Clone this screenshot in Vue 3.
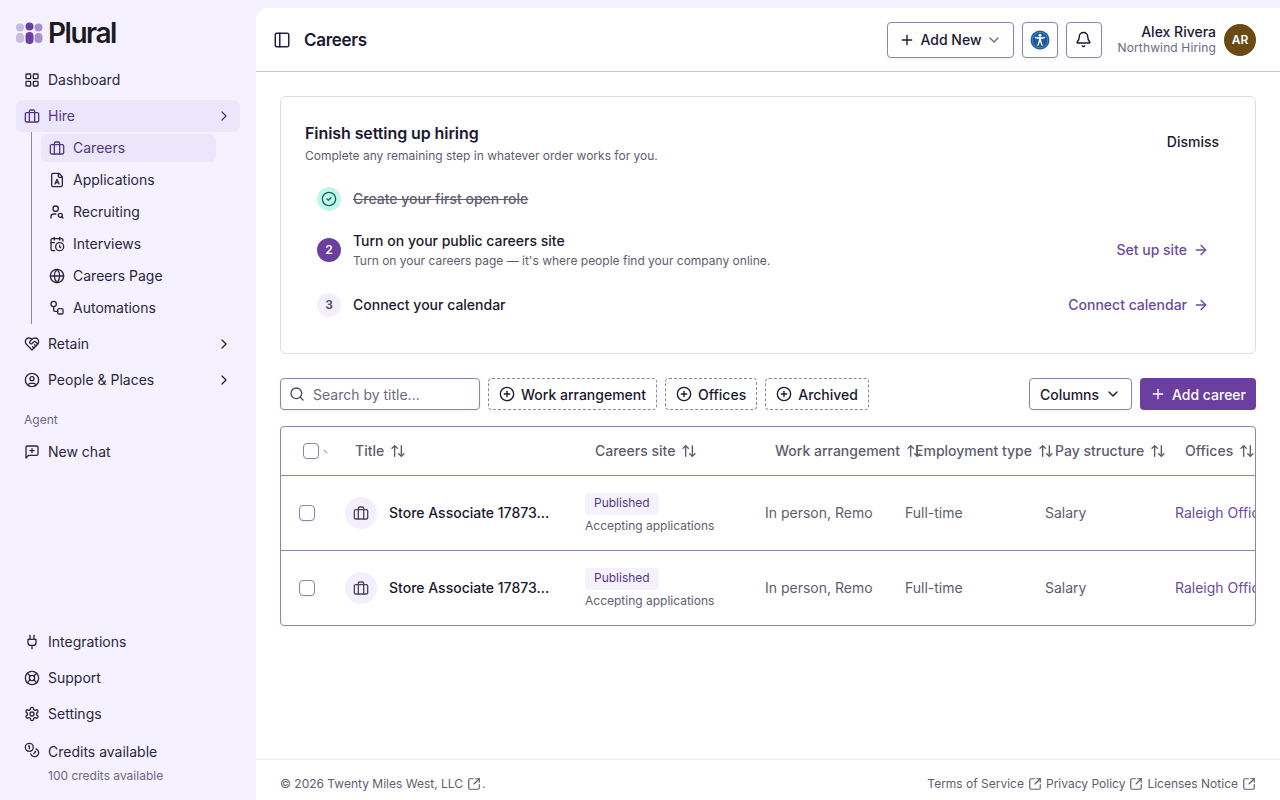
<template>
  <div class="shell">
    <aside class="sidebar">
      <div class="logo">
        <svg width="28" height="24" viewBox="0 0 28 24">
          <circle cx="5" cy="6.5" r="4" fill="#c7bbe4" />
          <circle cx="14.5" cy="5.5" r="4" fill="#6b3fa0" />
          <circle cx="23.5" cy="6.5" r="4" fill="#a88ed2" />
          <rect x="1" y="12" width="8" height="10" rx="4" fill="#c7bbe4" />
          <rect x="10.5" y="11" width="8" height="12" rx="4" fill="#6b3fa0" />
          <rect x="19.5" y="12" width="8" height="10" rx="4" fill="#a88ed2" />
        </svg>
        <span class="logo-text">Plural</span>
      </div>

      <nav class="nav">
        <a class="nav-item">
          <Icon name="grid" />
          <span>Dashboard</span>
        </a>
        <a class="nav-item active">
          <Icon name="briefcase" />
          <span>Hire</span>
          <Icon name="chevronRight" class="chev" />
        </a>
        <div class="subnav">
          <a
            v-for="(item, i) in hireItems"
            :key="item.label"
            class="sub-item"
            :class="{ current: i === 0 }"
          >
            <Icon :name="item.icon" />
            <span>{{ item.label }}</span>
          </a>
        </div>
        <a class="nav-item">
          <Icon name="heart" />
          <span>Retain</span>
          <Icon name="chevronRight" class="chev" />
        </a>
        <a class="nav-item">
          <Icon name="userCircle" />
          <span>People &amp; Places</span>
          <Icon name="chevronRight" class="chev" />
        </a>
        <div class="nav-label">Agent</div>
        <a class="nav-item">
          <Icon name="chat" />
          <span>New chat</span>
        </a>
      </nav>

      <div class="nav bottom">
        <a class="nav-item">
          <Icon name="plug" />
          <span>Integrations</span>
        </a>
        <a class="nav-item">
          <Icon name="buoy" />
          <span>Support</span>
        </a>
        <a class="nav-item">
          <Icon name="settings" />
          <span>Settings</span>
        </a>
        <div class="credits">
          <div class="credits-top">
            <Icon name="coins" />
            <span>Credits available</span>
          </div>
          <div class="credits-sub">100 credits available</div>
        </div>
      </div>
    </aside>

    <div class="main">
      <header class="topbar">
        <Icon name="panel" :size="18" class="panel-icon" />
        <h1>Careers</h1>
        <div class="topbar-right">
          <button class="btn add-new">
            <Icon name="plus" />
            <span>Add New</span>
            <Icon name="chevronDown" class="muted-chev" />
          </button>
          <button class="btn icon-btn">
            <svg width="20" height="20" viewBox="0 0 20 20">
              <circle cx="10" cy="10" r="9.5" fill="#1c5a9c" />
              <circle cx="10" cy="10" r="7.8" fill="none" stroke="#6f9fd0" stroke-width=".6" />
              <circle cx="10" cy="5.2" r="1.5" fill="#fff" />
              <g fill="none" stroke="#fff" stroke-linecap="round">
                <path d="M5.4 7.5Q10 8.7 14.6 7.5" stroke-width="1.3" />
                <path d="M10 8v3.4" stroke-width="2.2" />
                <path d="M9.4 11 7.9 15.4M10.6 11 12.1 15.4" stroke-width="1.3" />
              </g>
            </svg>
          </button>
          <button class="btn icon-btn">
            <Icon name="bell" :size="17" />
          </button>
          <div class="user">
            <div class="user-name">Alex Rivera</div>
            <div class="user-org">Northwind Hiring</div>
          </div>
          <div class="avatar">AR</div>
        </div>
      </header>

      <main class="content">
        <section class="setup-card">
          <div class="setup-head">
            <div>
              <h2>Finish setting up hiring</h2>
              <p>Complete any remaining step in whatever order works for you.</p>
            </div>
            <button class="dismiss">Dismiss</button>
          </div>
          <div class="steps">
            <div class="step step-first">
              <div class="badge done"><Icon name="circleCheck" :size="16" /></div>
              <div class="step-title struck">Create your first open role</div>
            </div>
            <div class="step step-second">
              <div class="badge now">2</div>
              <div class="step-body">
                <div class="step-title">Turn on your public careers site</div>
                <div class="step-desc">Turn on your careers page — it's where people find your company online.</div>
              </div>
              <a class="step-link">Set up site <Icon name="arrowRight" /></a>
            </div>
            <div class="step step-third">
              <div class="badge later">3</div>
              <div class="step-body">
                <div class="step-title">Connect your calendar</div>
              </div>
              <a class="step-link">Connect calendar <Icon name="arrowRight" /></a>
            </div>
          </div>
        </section>

        <div class="toolbar">
          <label class="search">
            <Icon name="search" />
            <input type="text" placeholder="Search by title...">
          </label>
          <button v-for="f in filters" :key="f" class="filter">
            <Icon name="circlePlus" />
            <span>{{ f }}</span>
          </button>
          <div class="toolbar-right">
            <button class="btn columns">
              <span>Columns</span>
              <Icon name="chevronDown" />
            </button>
            <button class="add-career">
              <Icon name="plus" />
              <span>Add career</span>
            </button>
          </div>
        </div>

        <div class="table-wrap">
          <table>
            <colgroup>
              <col style="width: 54px">
              <col style="width: 240px">
              <col style="width: 180px">
              <col style="width: 140px">
              <col style="width: 140px">
              <col style="width: 130px">
              <col style="width: 200px">
            </colgroup>
            <thead>
              <tr>
                <th class="select-head">
                  <span class="check"></span>
                  <span class="tick"></span>
                </th>
                <th v-for="c in columns" :key="c">
                  <div class="th-inner">
                    <span>{{ c }}</span>
                    <Icon name="sort" />
                  </div>
                </th>
              </tr>
            </thead>
            <tbody>
              <tr v-for="(row, i) in rows" :key="i">
                <td class="select-cell"><span class="check"></span></td>
                <td>
                  <div class="title-cell">
                    <div class="role-icon"><Icon name="briefcase" /></div>
                    <span class="role-name">{{ row.title }}</span>
                  </div>
                </td>
                <td>
                  <span class="pill">{{ row.status }}</span>
                  <div class="accepting">{{ row.note }}</div>
                </td>
                <td class="plain"><div class="clip">{{ row.arrangement }}</div></td>
                <td class="plain">{{ row.type }}</td>
                <td class="plain">{{ row.pay }}</td>
                <td class="office">{{ row.office }}</td>
              </tr>
            </tbody>
          </table>
        </div>
      </main>

      <footer class="footer">
        <div class="copy">
          <span>© 2026 Twenty Miles West, LLC</span>
          <Icon name="external" :size="14" />
          <span class="dot">.</span>
        </div>
        <div class="footer-links">
          <a v-for="l in footerLinks" :key="l">{{ l }} <Icon name="external" :size="14" /></a>
        </div>
      </footer>
    </div>
  </div>
</template>

<script setup>
import { h } from 'vue'

const icons = {
  grid: '<rect width="7" height="7" x="3" y="3" rx="1"/><rect width="7" height="7" x="14" y="3" rx="1"/><rect width="7" height="7" x="14" y="14" rx="1"/><rect width="7" height="7" x="3" y="14" rx="1"/>',
  briefcase: '<path d="M16 21V5a2 2 0 0 0-2-2h-4a2 2 0 0 0-2 2v16"/><rect width="20" height="14" x="2" y="7" rx="2"/>',
  chevronRight: '<path d="m9 18 6-6-6-6"/>',
  chevronDown: '<path d="m6 9 6 6 6-6"/>',
  fileA: '<path d="M15 2H6a2 2 0 0 0-2 2v16a2 2 0 0 0 2 2h12a2 2 0 0 0 2-2V7Z"/><path d="M14 2v4a2 2 0 0 0 2 2h4"/><path d="m9 18 3-7 3 7M10 16h4"/>',
  userSearch: '<circle cx="10" cy="7" r="4"/><path d="M10.3 15H7a4 4 0 0 0-4 4v2"/><circle cx="17" cy="17" r="3"/><path d="m21 21-1.9-1.9"/>',
  calendarClock: '<path d="M21 7.5V6a2 2 0 0 0-2-2H5a2 2 0 0 0-2 2v14a2 2 0 0 0 2 2h3.5"/><path d="M16 2v4"/><path d="M8 2v4"/><path d="M3 10h5"/><path d="M17.5 17.5 16 16.3V14"/><circle cx="16" cy="16" r="6"/>',
  globe: '<circle cx="12" cy="12" r="10"/><path d="M12 2a14.5 14.5 0 0 0 0 20 14.5 14.5 0 0 0 0-20"/><path d="M2 12h20"/>',
  workflow: '<circle cx="7" cy="6" r="4"/><path d="M7 10v5a2 2 0 0 0 2 2h4"/><rect width="8" height="8" x="13" y="13" rx="2"/>',
  heart: '<path d="M19 14c1.49-1.46 3-3.21 3-5.5A5.5 5.5 0 0 0 16.5 3c-1.76 0-3 .5-4.5 2-1.5-1.5-2.74-2-4.5-2A5.5 5.5 0 0 0 2 8.5c0 2.3 1.5 4.05 3 5.5l7 7Z"/><path d="M12 5 9.04 7.96a2.17 2.17 0 0 0 0 3.08c.82.82 2.13.85 3 .07l2.07-1.9a2.82 2.82 0 0 1 3.79 0l2.96 2.66"/><path d="m18 15-2-2"/><path d="m15 18-2-2"/>',
  userCircle: '<circle cx="12" cy="12" r="10"/><circle cx="12" cy="10" r="3"/><path d="M7 20.662V19a2 2 0 0 1 2-2h6a2 2 0 0 1 2 2v1.662"/>',
  chat: '<path d="M21 15a2 2 0 0 1-2 2H7l-4 4V5a2 2 0 0 1 2-2h14a2 2 0 0 1 2 2z"/><path d="M12 7v6"/><path d="M9 10h6"/>',
  plug: '<path d="M12 22v-5"/><path d="M9 8V2"/><path d="M15 8V2"/><path d="M18 8v5a4 4 0 0 1-4 4h-4a4 4 0 0 1-4-4V8Z"/>',
  buoy: '<circle cx="12" cy="12" r="10"/><path d="m4.93 4.93 4.24 4.24"/><path d="m14.83 9.17 4.24-4.24"/><path d="m14.83 14.83 4.24 4.24"/><path d="m9.17 14.83-4.24 4.24"/><circle cx="12" cy="12" r="4"/>',
  settings: '<path d="M12.22 2h-.44a2 2 0 0 0-2 2v.18a2 2 0 0 1-1 1.73l-.43.25a2 2 0 0 1-2 0l-.15-.08a2 2 0 0 0-2.73.73l-.22.38a2 2 0 0 0 .73 2.73l.15.1a2 2 0 0 1 1 1.72v.51a2 2 0 0 1-1 1.74l-.15.09a2 2 0 0 0-.73 2.73l.22.38a2 2 0 0 0 2.73.73l.15-.08a2 2 0 0 1 2 0l.43.25a2 2 0 0 1 1 1.73V20a2 2 0 0 0 2 2h.44a2 2 0 0 0 2-2v-.18a2 2 0 0 1 1-1.73l.43-.25a2 2 0 0 1 2 0l.15.08a2 2 0 0 0 2.73-.73l.22-.39a2 2 0 0 0-.73-2.73l-.15-.08a2 2 0 0 1-1-1.74v-.5a2 2 0 0 1 1-1.74l.15-.09a2 2 0 0 0 .73-2.73l-.22-.38a2 2 0 0 0-2.73-.73l-.15.08a2 2 0 0 1-2 0l-.43-.25a2 2 0 0 1-1-1.73V4a2 2 0 0 0-2-2z"/><circle cx="12" cy="12" r="3"/>',
  coins: '<circle cx="8" cy="8" r="6"/><path d="M18.09 10.37A6 6 0 1 1 10.34 18"/><path d="M7 6h1v4"/><path d="m16.71 13.88.7.71-2.82 2.82"/>',
  panel: '<rect width="18" height="18" x="3" y="3" rx="2"/><path d="M9 3v18"/>',
  plus: '<path d="M5 12h14"/><path d="M12 5v14"/>',
  bell: '<path d="M10.268 21a2 2 0 0 0 3.464 0"/><path d="M3.262 15.326A1 1 0 0 0 4 17h16a1 1 0 0 0 .74-1.673C19.41 13.956 18 12.499 18 8A6 6 0 0 0 6 8c0 4.499-1.411 5.956-2.738 7.326"/>',
  circleCheck: '<circle cx="12" cy="12" r="10"/><path d="m9 12 2 2 4-4"/>',
  arrowRight: '<path d="M5 12h14"/><path d="m12 5 7 7-7 7"/>',
  search: '<circle cx="11" cy="11" r="8"/><path d="m21 21-4.3-4.3"/>',
  circlePlus: '<circle cx="12" cy="12" r="10"/><path d="M8 12h8"/><path d="M12 8v8"/>',
  sort: '<path d="m21 16-4 4-4-4"/><path d="M17 20V4"/><path d="m3 8 4-4 4 4"/><path d="M7 4v16"/>',
  external: '<path d="M21 13v6a2 2 0 0 1-2 2H5a2 2 0 0 1-2-2V5a2 2 0 0 1 2-2h6"/><path d="m21 3-9 9"/><path d="M15 3h6v6"/>'
}

// small inline icon, stroke follows the text colour
const Icon = (props) => h('svg', {
  width: props.size || 16,
  height: props.size || 16,
  viewBox: '0 0 24 24',
  fill: 'none',
  stroke: 'currentColor',
  'stroke-width': 2,
  'stroke-linecap': 'round',
  'stroke-linejoin': 'round',
  innerHTML: icons[props.name]
})
Icon.props = ['name', 'size']

const hireItems = [
  { label: 'Careers', icon: 'briefcase' },
  { label: 'Applications', icon: 'fileA' },
  { label: 'Recruiting', icon: 'userSearch' },
  { label: 'Interviews', icon: 'calendarClock' },
  { label: 'Careers Page', icon: 'globe' },
  { label: 'Automations', icon: 'workflow' }
]

const filters = ['Work arrangement', 'Offices', 'Archived']
const columns = ['Title', 'Careers site', 'Work arrangement', 'Employment type', 'Pay structure', 'Offices']
const footerLinks = ['Terms of Service', 'Privacy Policy', 'Licenses Notice']

const rows = [1, 2].map(() => ({
  title: 'Store Associate 17873...',
  status: 'Published',
  note: 'Accepting applications',
  arrangement: 'In person, Remote',
  type: 'Full-time',
  pay: 'Salary',
  office: 'Raleigh Office'
}))
</script>

<style>
html, body {
  margin: 0;
  background: #f5f1fe;
}
</style>

<style scoped>
* {
  box-sizing: border-box;
}

.shell {
  display: flex;
  height: 800px;
  overflow: hidden;
  background: #f5f1fe;
  font-family: Inter, "Liberation Sans", sans-serif;
  font-size: 14px;
  line-height: 20px;
  color: #1c1830;
}

.sidebar {
  width: 256px;
  flex-shrink: 0;
  display: flex;
  flex-direction: column;
  padding: 18px 16px 16px;
}

.logo {
  display: flex;
  align-items: center;
  gap: 5px;
  height: 30px;
  margin-bottom: 16px;
  margin-left: -1px;
}

.logo-text {
  font-size: 28px;
  line-height: 30px;
  font-weight: 600;
  letter-spacing: -1.5px;
  color: #1b1b1f;
}

.nav {
  display: flex;
  flex-direction: column;
  gap: 4px;
}

.nav.bottom {
  margin-top: auto;
}

.nav-item {
  display: flex;
  align-items: center;
  gap: 8px;
  height: 32px;
  padding: 0 8px;
  border-radius: 6px;
  color: #2a2640;
}

.nav-item.active {
  background: #ece6fb;
  color: #53397f;
}

.chev {
  margin-left: auto;
}

.subnav {
  display: flex;
  flex-direction: column;
  gap: 4px;
  margin: -4px 0 0 15px;
  padding: 2px 0 2px 9px;
  border-left: 1px solid #8d84ad;
  width: 185px;
}

.sub-item {
  display: flex;
  align-items: center;
  gap: 8px;
  height: 28px;
  padding: 0 8px;
  border-radius: 6px;
  color: #2a2640;
}

.sub-item.current {
  background: #ece6fb;
  color: #53397f;
}

.nav-label {
  height: 32px;
  padding: 12px 8px 0;
  font-size: 12px;
  line-height: 16px;
  color: #6c6880;
}

.credits {
  padding: 4px 8px 0;
  height: 50px;
}

.credits-top {
  display: flex;
  align-items: center;
  gap: 8px;
  height: 24px;
  color: #2a2640;
}

.credits-top span {
  margin-top: 4px;
}

.credits-sub {
  margin: 6px 0 0 24px;
  font-size: 12px;
  line-height: 16px;
  color: #6c6880;
}

.main {
  flex: 1;
  min-width: 0;
  display: flex;
  flex-direction: column;
  margin-top: 8px;
  background: #fff;
  border-top-left-radius: 12px;
}

.topbar {
  display: flex;
  align-items: center;
  gap: 12px;
  height: 64px;
  flex-shrink: 0;
  padding: 0 24px 0 17px;
  border-bottom: 1px solid #c9c6d2;
}

.panel-icon {
  color: #26223a;
}

.topbar h1 {
  margin: 0 0 0 1px;
  font-size: 17px;
  font-weight: 600;
  letter-spacing: -0.3px;
  color: #1c1830;
}

.topbar-right {
  display: flex;
  align-items: center;
  margin-left: auto;
}

.btn {
  display: inline-flex;
  align-items: center;
  justify-content: center;
  height: 36px;
  background: #fff;
  border: 1px solid #8d84ad;
  border-radius: 4px;
  font-family: inherit;
  font-size: 14px;
  font-weight: 500;
  color: #1c1830;
  box-shadow: 0 1px 3px rgba(50, 30, 100, 0.08);
}

.add-new {
  width: 127px;
  gap: 6px;
}

.muted-chev {
  margin-left: -2px;
  color: #6c6880;
}

.icon-btn {
  width: 36px;
  margin-left: 8px;
  padding: 0;
}

.user {
  margin-left: 16px;
  text-align: right;
}

.user-name {
  font-size: 14px;
  line-height: 16px;
  font-weight: 500;
}

.user-org {
  font-size: 12px;
  line-height: 15px;
  letter-spacing: 0.13px;
  color: #6c6880;
}

.avatar {
  width: 32px;
  height: 32px;
  margin-left: 8px;
  border-radius: 50%;
  background: #6b4a14;
  color: #fff;
  font-size: 12px;
  font-weight: 600;
  display: flex;
  align-items: center;
  justify-content: center;
}

.content {
  flex: 1;
  min-height: 0;
  padding: 24px;
}

.setup-card {
  height: 258px;
  padding: 26px 36px 0 24px;
  border: 1px solid #dddbe4;
  border-radius: 6px;
}

.setup-head {
  display: flex;
  justify-content: space-between;
  align-items: flex-start;
}

.setup-head h2 {
  margin: 0;
  font-size: 16px;
  line-height: 20px;
  font-weight: 600;
  letter-spacing: -0.08px;
  color: #1c1830;
}

.setup-head p {
  margin: 5px 0 0;
  font-size: 12px;
  line-height: 16px;
  color: #5f5c6e;
}

.dismiss {
  margin: 10px 0 0;
  padding: 0;
  border: 0;
  background: none;
  font-family: inherit;
  font-size: 14px;
  font-weight: 500;
  color: #1c1830;
}

.steps {
  display: flex;
  flex-direction: column;
  margin-top: 23px;
  padding: 0 10px 0 12px;
}

.step {
  display: flex;
  align-items: center;
  gap: 12px;
}

.step-first {
  height: 24px;
}

.step-second {
  height: 38px;
  margin-top: 20px;
}

.step-third {
  height: 24px;
  margin-top: 24px;
}

.badge {
  width: 24px;
  height: 24px;
  flex-shrink: 0;
  border-radius: 50%;
  display: flex;
  align-items: center;
  justify-content: center;
  font-size: 12px;
  font-weight: 600;
}

.badge.done {
  background: #c4f5ea;
  color: #0e6b60;
}

.badge.now {
  background: #6b3fa0;
  color: #fff;
}

.badge.later {
  background: #f3effc;
  color: #4a4560;
}

.step-title {
  font-size: 14px;
  line-height: 20px;
  font-weight: 500;
  color: #1c1830;
}

.step-title.struck {
  color: #5f5c6e;
  text-decoration: line-through;
}

.step-body {
  flex: 1;
}

.step-desc {
  margin-top: 2px;
  font-size: 12px;
  line-height: 16px;
  color: #5f5c6e;
}

.step-link {
  display: inline-flex;
  align-items: center;
  gap: 6px;
  font-weight: 500;
  color: #6b4a9e;
}

.toolbar {
  display: flex;
  align-items: center;
  gap: 8px;
  margin-top: 24px;
}

.search {
  display: flex;
  align-items: center;
  gap: 8px;
  width: 200px;
  height: 32px;
  padding: 0 8px;
  border: 1px solid #8d84ad;
  border-radius: 4px;
  color: #4a4560;
  box-shadow: 0 1px 3px rgba(50, 30, 100, 0.08);
}

.search input {
  flex: 1;
  min-width: 0;
  border: 0;
  outline: 0;
  padding: 0;
  font-family: inherit;
  font-size: 14px;
  background: none;
}

.search input::placeholder {
  color: #6c6880;
  opacity: 1;
}

.filter {
  display: inline-flex;
  align-items: center;
  gap: 6px;
  height: 32px;
  padding: 0 10px;
  background: #fff;
  border: 1px dashed #8d84ad;
  border-radius: 4px;
  font-family: inherit;
  font-size: 14px;
  font-weight: 500;
  color: #1c1830;
}

.toolbar-right {
  display: flex;
  gap: 8px;
  margin-left: auto;
}

.columns {
  width: 103px;
  height: 32px;
  gap: 6px;
}

.add-career {
  display: inline-flex;
  align-items: center;
  gap: 6px;
  width: 116px;
  height: 32px;
  padding: 0 10px;
  border: 0;
  border-radius: 4px;
  background: #6b3fa0;
  font-family: inherit;
  font-size: 14px;
  font-weight: 500;
  color: #fff;
  white-space: nowrap;
}

.table-wrap {
  margin-top: 16px;
  border: 1px solid #8d84ad;
  border-radius: 4px;
  overflow: hidden;
}

table {
  width: 884px;
  table-layout: fixed;
  border-collapse: separate;
  border-spacing: 0;
}

th {
  height: 49px;
  padding: 0 0 0 20px;
  border-bottom: 1px solid #8d84ad;
  font-weight: 500;
  text-align: left;
  color: #5f5c6e;
  white-space: nowrap;
  overflow: visible;
}

.th-inner {
  display: flex;
  align-items: center;
  gap: 6px;
}

.th-inner svg {
  flex-shrink: 0;
}

.select-head {
  padding-left: 22px;
  position: relative;
}

.tick {
  position: absolute;
  left: 42px;
  top: 24px;
  width: 5px;
  height: 1px;
  background: #8b879a;
  transform: rotate(45deg);
}

.check {
  display: block;
  width: 16px;
  height: 16px;
  background: #fff;
  border: 1px solid #8d84ad;
  border-radius: 4px;
  box-shadow: 0 1px 2px rgba(50, 30, 100, 0.08);
}

td {
  height: 75px;
  padding: 0 0 0 10px;
  border-bottom: 1px solid #8d84ad;
  white-space: nowrap;
  overflow: hidden;
}

tbody tr:last-child td {
  border-bottom: 0;
  height: 74px;
}

td.select-cell {
  padding-left: 18px;
}

.title-cell {
  display: flex;
  align-items: center;
  gap: 12px;
}

.role-icon {
  width: 32px;
  height: 32px;
  border-radius: 50%;
  background: #f3effc;
  color: #4a4560;
  display: flex;
  align-items: center;
  justify-content: center;
}

.role-name {
  font-weight: 500;
  color: #1c1830;
}

.pill {
  display: block;
  width: fit-content;
  height: 22px;
  padding: 0 9px;
  border-radius: 4px;
  background: #f5f1fd;
  font-size: 12px;
  font-weight: 400;
  line-height: 20px;
  color: #53397f;
}

.accepting {
  margin-top: 3px;
  font-size: 12px;
  line-height: 16px;
  color: #5f5c6e;
}

.plain {
  color: #5f5c6e;
}

.clip {
  width: 108px;
  overflow: hidden;
}

.office {
  color: #6b4a9e;
}

.footer {
  display: flex;
  justify-content: space-between;
  align-items: center;
  height: 41px;
  flex-shrink: 0;
  padding: 7px 24px 0;
  border-top: 1px solid #eeecf3;
  font-size: 12px;
  color: #5f5c6e;
}

.copy,
.footer-links a {
  display: inline-flex;
  align-items: center;
  gap: 4px;
}

.copy .dot {
  margin-left: -3px;
}

.footer-links {
  display: flex;
  gap: 4px;
}
</style>
